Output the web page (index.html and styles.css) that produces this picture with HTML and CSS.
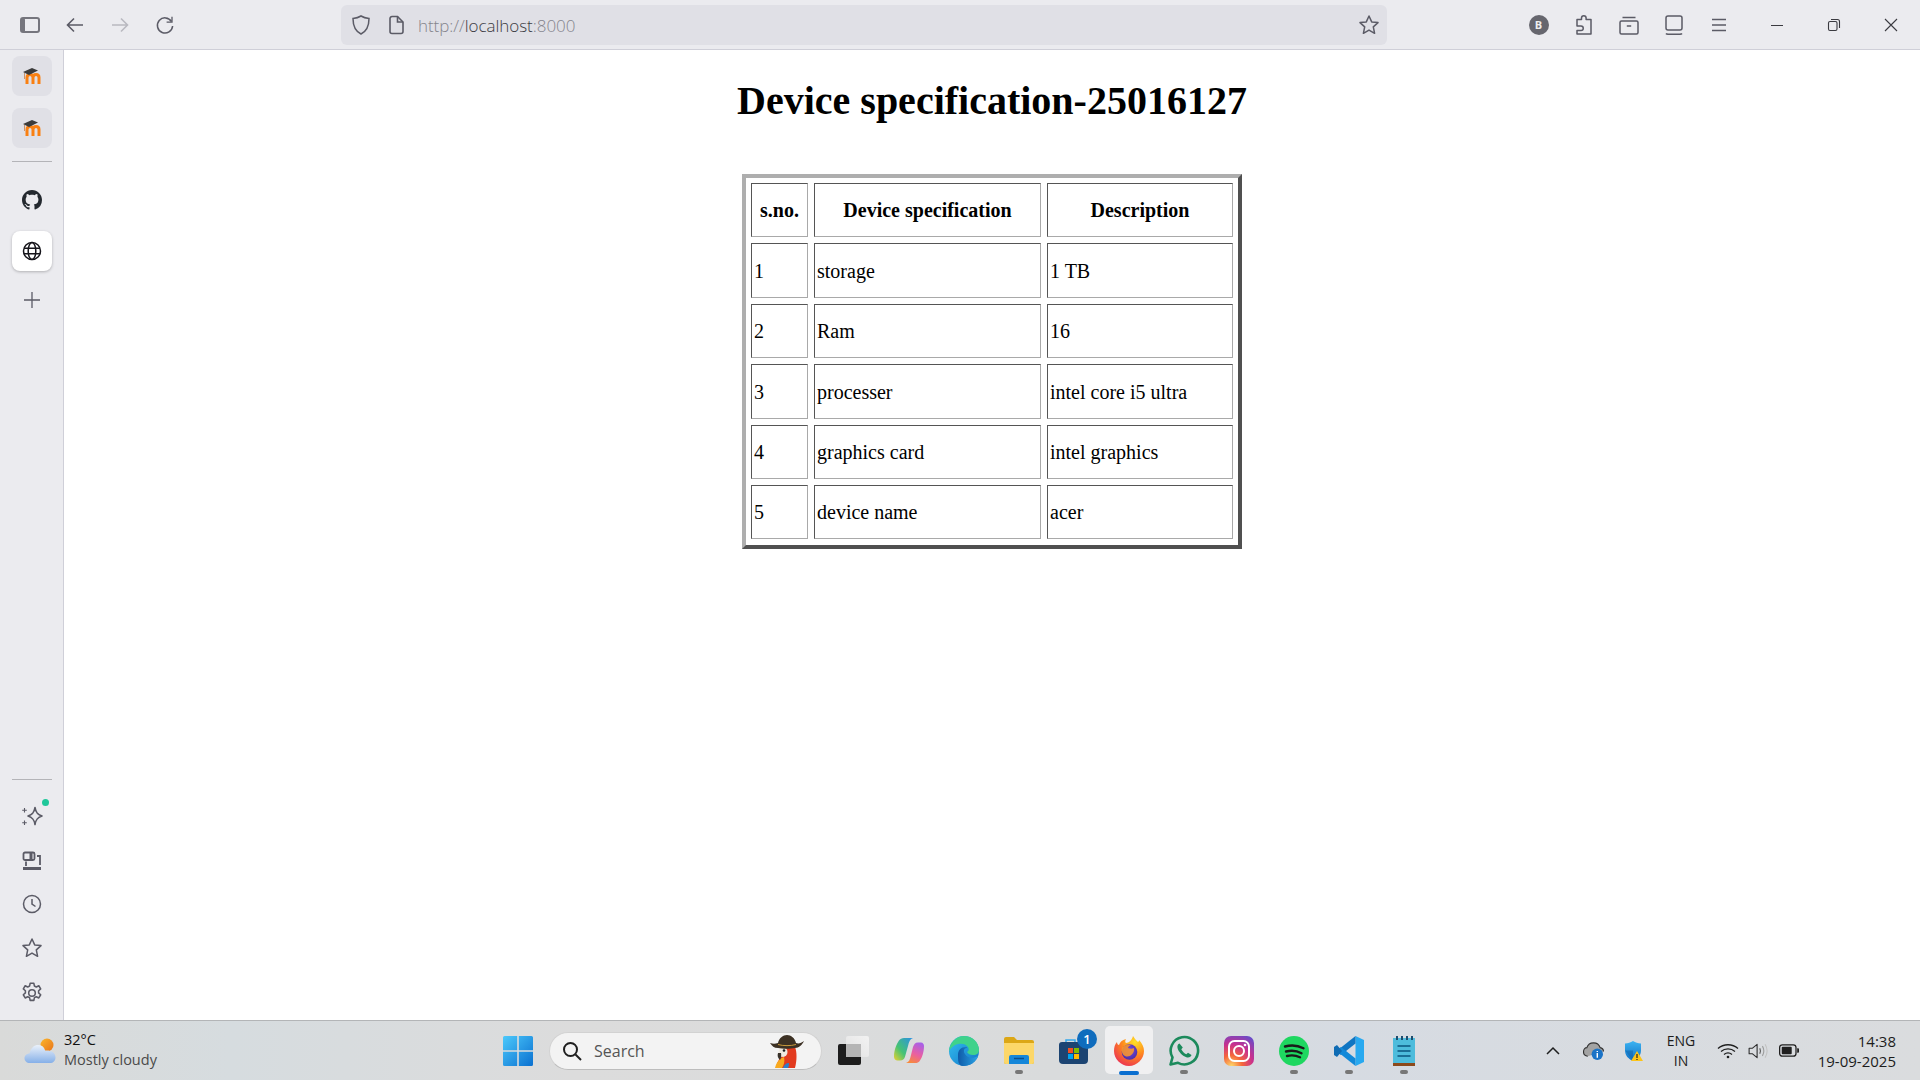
FILE: index.html

```html
<!DOCTYPE html>
<html lang="en">
<head>
  <meta charset="UTF-8" />
  <title>Device specification</title>
  <link rel="stylesheet" href="styles.css">
</head>
<body>
  <!-- browser toolbar -->
  <header class="toolbar">
    <div class="tool-group nav-group">
      <span class="tool"><svg width="22" height="18" viewBox="0 0 22 18"><rect x="2" y="2" width="18" height="14" rx="2" fill="none" stroke="#75757d" stroke-width="2"/><rect x="2" y="2" width="4" height="14" rx="1.500" fill="#75757d"/></svg></span>
      <span class="tool"><svg width="20" height="18" viewBox="0 0 20 18" fill="none" stroke="#5b5b66" stroke-width="1.600"><path d="M18 9H2.500M9 2.500 2.500 9 9 15.500"/></svg></span>
      <span class="tool"><svg width="20" height="18" viewBox="0 0 20 18" fill="none" stroke="#b9b9c0" stroke-width="1.600"><path d="M2 9h15.500M11 2.500 17.500 9 11 15.500"/></svg></span>
      <span class="tool"><svg width="20" height="20" viewBox="0 0 20 20" fill="none" stroke="#5b5b66" stroke-width="1.500"><path d="M16.500 6.500A7.600 7.600 0 1 0 17.600 11"/><path d="M17 1.800v5.400h-5.400" stroke-width="1.300"/></svg></span>
    </div>
    <div class="urlbar">
      <svg class="url-shield" width="20" height="22" viewBox="0 0 20 22" fill="none" stroke="#5b5b66" stroke-width="1.500"><path d="M10 2c2.500 1.600 5 2.200 8 2.400 0 7.400-1.800 12.400-8 15.600C3.800 16.800 2 11.800 2 4.400 5 4.200 7.500 3.600 10 2z"/></svg>
      <svg class="url-doc" width="18" height="20" viewBox="0 0 18 20" fill="none" stroke="#5b5b66" stroke-width="1.600"><path d="M3 3.500A2 2 0 0 1 5 1.500h5.500L16 7v9.500a2 2 0 0 1-2 2H5a2 2 0 0 1-2-2z"/><path d="M10.500 1.500V7H16"/></svg>
      <span class="url-text"><span class="dim">http://</span>localhost<span class="dim">:8000</span></span>
      <svg class="url-star" width="22" height="22" viewBox="0 0 22 22" fill="none" stroke="#5b5b66" stroke-width="1.500" stroke-linejoin="round"><path d="m11 2 2.700 5.900 6.300.7-4.700 4.300 1.300 6.400L11 16.100l-5.600 3.200 1.300-6.400L2 8.600l6.300-.7z"/></svg>
    </div>
    <div class="tool-group ext-group">
      <span class="tool"><span class="badge-b">B</span></span>
      <span class="tool"><svg width="20" height="22" viewBox="0 0 20 22" fill="none" stroke="#5b5b66" stroke-width="1.500" stroke-linejoin="round"><path d="M3 5.500h4.500V4a2.300 2.300 0 0 1 4.600 0v1.500H17V20H3v-3.500h4a2.200 2.200 0 0 0 0-4.500H3z"/></svg></span>
      <span class="tool"><svg width="22" height="22" viewBox="0 0 22 22" fill="none" stroke="#5b5b66" stroke-width="1.500"><rect x="2" y="7" width="18" height="13" rx="1.500"/><path d="M4.500 3.500h13M8.800 12h4.400"/></svg></span>
      <span class="tool"><svg width="20" height="22" viewBox="0 0 20 22" fill="none" stroke="#5b5b66" stroke-width="1.500"><rect x="2" y="2" width="16" height="14" rx="2"/><path d="M2 19.500c.5.700 1 .8 2 .8h12c1 0 1.500-.1 2-.8"/></svg></span>
      <span class="tool"><svg width="18" height="16" viewBox="0 0 18 16" stroke="#5b5b66" stroke-width="1.300"><path d="M2 2.500h14M2 8h14M2 13.500h14"/></svg></span>
    </div>
    <div class="win-controls">
      <span class="win-btn"><svg width="14" height="14" viewBox="0 0 14 14" stroke="#3a3a40"><path d="M1 7.500h12"/></svg></span>
      <span class="win-btn"><svg width="14" height="14" viewBox="0 0 14 14" fill="none" stroke="#3a3a40" stroke-width="1.100"><rect x="1.500" y="3.500" width="8.500" height="9" rx="1.500"/><path d="M4 1.500h6.500a2 2 0 0 1 2 2V10"/></svg></span>
      <span class="win-btn"><svg width="14" height="14" viewBox="0 0 14 14" stroke="#3a3a40" stroke-width="1.100"><path d="m1 1 12 12M13 1 1 13"/></svg></span>
    </div>
  </header>

  <div class="middle">
    <aside class="sidebar">
      <span class="side-tile">
        <svg width="24" height="18" viewBox="0 0 24 18"><path d="M7 17V10.500Q7 7.500 10 7.500t3 3V17M13 10.500Q13 7.500 16 7.500t3 3V17" fill="none" stroke="#f98012" stroke-width="3"/><path d="M3 5 12 1l6 2.500L9 8z" fill="#3b3b3b"/><path d="M4.500 6v6" stroke="#c9936a"/></svg>
      </span>
      <span class="side-tile">
        <svg width="24" height="18" viewBox="0 0 24 18"><path d="M7 17V10.500Q7 7.500 10 7.500t3 3V17M13 10.500Q13 7.500 16 7.500t3 3V17" fill="none" stroke="#f98012" stroke-width="3"/><path d="M3 5 12 1l6 2.500L9 8z" fill="#3b3b3b"/><path d="M4.500 6v6" stroke="#c9936a"/></svg>
      </span>
      <div class="side-sep first-sep"></div>
      <span class="side-item github"><svg width="20" height="20" viewBox="0 0 16 16" fill="#24292f"><path d="M8 0C3.580 0 0 3.580 0 8c0 3.540 2.290 6.530 5.470 7.590.4.070.55-.17.55-.38 0-.19-.01-.82-.01-1.490-2.010.37-2.530-.49-2.690-.94-.09-.23-.48-.94-.82-1.130-.28-.15-.68-.52-.01-.53.63-.01 1.080.58 1.230.82.72 1.210 1.870.87 2.330.66.07-.52.28-.87.51-1.070-1.780-.2-3.640-.89-3.640-3.950 0-.87.31-1.590.82-2.150-.08-.2-.36-1.020.08-2.120 0 0 .67-.21 2.200.82.64-.18 1.320-.27 2-.27.68 0 1.360.09 2 .27 1.530-1.040 2.200-.82 2.200-.82.44 1.100.16 1.920.08 2.120.51.56.82 1.270.82 2.150 0 3.070-1.870 3.750-3.650 3.950.29.25.54.73.54 1.480 0 1.070-.01 1.930-.01 2.200 0 .21.15.46.55.38A8.013 8.013 0 0 0 16 8c0-4.420-3.580-8-8-8z"/></svg></span>
      <span class="side-tile current"><svg width="20" height="20" viewBox="0 0 20 20" fill="none" stroke="#15141a" stroke-width="1.500"><circle cx="10" cy="10" r="8.500"/><ellipse cx="10" cy="10" rx="3.800" ry="8.500"/><path d="M2 7.200h16M2 12.800h16"/></svg></span>
      <span class="side-item"><svg width="16" height="16" viewBox="0 0 16 16" stroke="#5b5b66" stroke-width="1.300"><path d="M8 0v16M0 8h16"/></svg></span>

      <div class="side-bottom">
        <div class="side-sep"></div>
        <span class="side-row sparkle">
          <svg width="22" height="22" viewBox="0 0 22 22" fill="none" stroke="#5b5b66" stroke-width="1.600" stroke-linejoin="round"><path d="M14 2.500c.8 4.800 2.300 7 7 8.500-4.700 1.500-6.200 3.700-7 8.500-.8-4.800-2.300-7-7-8.500 4.700-1.500 6.200-3.700 7-8.500z"/><path d="M3.500 3v4.500M1.200 5.200h4.600M3.500 15.500V20M1.200 17.700h4.600" stroke-width="1.100"/></svg>
          <span class="green-dot"></span>
        </span>
        <span class="side-row drive"><svg width="20" height="20" viewBox="0 0 20 20" fill="none" stroke="#5b5b66" stroke-width="1.800"><rect x="1.500" y="1.500" width="11" height="7.500" rx="1.500"/><path d="M9 1.500v7.500" stroke-width="3"/><path d="M15 5h3v9M4 10.500V15"/><path d="M1 17.500h18" stroke-width="3"/></svg></span>
        <span class="side-row"><svg width="20" height="20" viewBox="0 0 20 20" fill="none" stroke="#5b5b66" stroke-width="1.500"><circle cx="10" cy="10" r="8.500"/><path d="M10 5v5l3.500 2.500"/></svg></span>
        <span class="side-row"><svg width="22" height="22" viewBox="0 0 22 22" fill="none" stroke="#5b5b66" stroke-width="1.500" stroke-linejoin="round"><path d="m11 2 2.700 5.900 6.300.7-4.700 4.300 1.300 6.400L11 16.100l-5.600 3.200 1.300-6.400L2 8.600l6.300-.7z"/></svg></span>
        <span class="side-row gear"><svg width="22" height="22" viewBox="0 0 20 20" fill="none" stroke="#5b5b66" stroke-width="1.400" stroke-linejoin="round"><circle cx="10" cy="10" r="3"/><path d="m8.300 1.200h3.400l.5 2.500 1.700.8 2.300-1.100 1.700 2.900-1.900 1.700v1.900l1.900 1.700-1.700 2.900-2.300-1.100-1.700.8-.5 2.500H8.300l-.5-2.500-1.700-.8-2.300 1.100-1.700-2.900 1.900-1.700V8l-1.900-1.700 1.700-2.900 2.300 1.100 1.700-.8z"/></svg></span>
      </div>
    </aside>

    <main class="page">
      <h1>Device specification-25016127</h1>
      <div class="spec-frame">
        <table class="spec-table">
          <thead>
            <tr><th class="col-no">s.no.</th><th class="col-spec">Device specification</th><th class="col-desc">Description</th></tr>
          </thead>
          <tbody>
            <tr class="tall"><td>1</td><td>storage</td><td>1 TB</td></tr>
            <tr><td>2</td><td>Ram</td><td>16</td></tr>
            <tr class="tall"><td>3</td><td>processer</td><td>intel core i5 ultra</td></tr>
            <tr><td>4</td><td>graphics card</td><td>intel graphics</td></tr>
            <tr><td>5</td><td>device name</td><td>acer</td></tr>
          </tbody>
        </table>
      </div>
    </main>
  </div>

  <!-- windows taskbar -->
  <footer class="taskbar">
    <div class="weather">
      <svg width="32" height="28" viewBox="0 0 32 28"><defs><linearGradient id="sun" x1="0" y1="0" x2="1" y2="1"><stop offset="0" stop-color="#fbb62c"/><stop offset="1" stop-color="#e8741a"/></linearGradient><linearGradient id="cloud" x1="0" y1="0" x2="0" y2="1"><stop offset="0" stop-color="#eaf1fa"/><stop offset="1" stop-color="#86b0e8"/></linearGradient></defs><circle cx="23" cy="8" r="6.500" fill="url(#sun)"/><path d="M6 26c-3.500 0-5.500-2.300-5.500-4.800 0-2.800 2.200-4.700 5-4.800C7 10.500 10.500 8 14 8c3.600 0 6 1.800 7.200 5.500 5.500-.7 10.300 1.900 10.300 7 0 3.500-2.400 5.500-5.500 5.500z" fill="url(#cloud)"/></svg>
      <div class="weather-text"><span class="temp">32°C</span><span class="sky">Mostly cloudy</span></div>
    </div>

    <div class="task-row">
      <span class="task-item"><svg width="30" height="30" viewBox="0 0 30 30"><defs><linearGradient id="win" x1="0" y1="0" x2="1" y2="1"><stop offset="0" stop-color="#4cc9fb"/><stop offset="1" stop-color="#0a70d0"/></linearGradient></defs><path fill="url(#win)" d="M0 1.500A1.500 1.500 0 0 1 1.500 0h12.700v14.200H0zM15.800 0h12.700A1.500 1.500 0 0 1 30 1.500v12.700H15.800zM0 15.800h14.200V30H1.500A1.500 1.500 0 0 1 0 28.500zM15.800 15.800H30v12.700a1.500 1.500 0 0 1-1.500 1.500H15.800z"/></svg></span>

      <div class="search">
        <svg width="20" height="20" viewBox="0 0 20 20" fill="none" stroke="#1f1f1f" stroke-width="2"><circle cx="8.500" cy="8.500" r="6.500"/><path d="m13.500 13.500 5.500 5.500"/></svg>
        <span class="search-label">Search</span>
        <svg class="parrot" width="34" height="34" viewBox="0 0 34 34"><path d="M11 13h14c2 5 2 13 0 21H6c1-6 3-9 6-12z" fill="#e23a1e"/><path d="M5 34c1-5 4-9 9-11 1 4 0 8-2 11z" fill="#f8a91f"/><path d="M13 34c1-3 3-5 6-5 0 2 0 3-1 5z" fill="#2e7fc9"/><ellipse cx="13" cy="18" rx="4.500" ry="5" fill="#efe9df"/><circle cx="14" cy="16.500" r="1.300" fill="#1c1c1c"/><path d="M8 19c-1 3 0 5 2 7 1-2 1.500-4 1-7z" fill="#39322a"/><path d="M0 9c3 1 5 1 8 0 1-5 5-8 9-8s8 3 9 8c3 1 5 0 8-2-2 4-5 7-9 7-5 1-12 1-17 0-4 0-6-2-8-5z" fill="#3d3124"/><path d="M8 10.500c5 1.500 13 1.500 18 0" stroke="#c99a3d" fill="none"/></svg>
      </div>

      <span class="task-item"><svg width="32" height="30" viewBox="0 0 32 30"><defs><linearGradient id="tv" x1="1" y1="0" x2="0" y2="1"><stop offset="0" stop-color="#f2f2f2"/><stop offset="1" stop-color="#e2e2e2"/></linearGradient></defs><rect x="8" y="0" width="23" height="21" rx="2" fill="url(#tv)"/><rect x="0" y="8" width="23" height="21" rx="2" fill="#1d1d1d"/><rect x="8" y="8" width="15" height="13" fill="#b5b5b5"/></svg></span>

      <span class="task-item"><svg width="30" height="27" viewBox="0 0 30 30" preserveAspectRatio="none"><defs><linearGradient id="co1" x1="0" y1="1" x2="1" y2="0"><stop offset="0" stop-color="#ead02f"/><stop offset=".4" stop-color="#45c373"/><stop offset="1" stop-color="#2c8fe8"/></linearGradient><linearGradient id="co2" x1=".7" y1="0" x2=".3" y2="1"><stop offset="0" stop-color="#a860e8"/><stop offset=".55" stop-color="#ea5fa0"/><stop offset="1" stop-color="#f78a3c"/></linearGradient></defs><path d="M10 1h9c-3 1-4 4-5 9l-3 12c-1 3-2 4-5 4H3c-2 0-3-2-3-4 0-8 3-15 5-18 1-2 3-3 5-3z" fill="url(#co1)"/><path d="M21 29h-9c3-1 4-4 5-9l2-9c1-3 2-5 5-5h3c2 0 3 2 3 4 0 7-2 13-4 16-1 2-3 3-5 3z" fill="url(#co2)"/></svg></span>

      <span class="task-item"><svg width="30" height="30" viewBox="0 0 30 30"><defs><linearGradient id="ed1" x1="0" y1="0" x2="1" y2="1"><stop offset="0" stop-color="#35c1f1"/><stop offset="1" stop-color="#1173c6"/></linearGradient><linearGradient id="ed2" x1="0" y1="0" x2="1" y2="0"><stop offset="0" stop-color="#0f5aa8"/><stop offset="1" stop-color="#2aa4e6"/></linearGradient></defs><circle cx="15" cy="15" r="15" fill="url(#ed1)"/><path d="M15 0c8 0 15 6 15 14 0 3-2 5-6 5-3 0-5-1-6-3 2-1 2-3 1-5-2-3-6-4-10-3C5 9 1 12 0 16 0 7 7 0 15 0z" fill="#3fd28b"/><path d="M9 19c0-5 3-8 8-8 1 0 1 0 1 1-3 0-4 3-2 6 2 4 8 5 13 2-2 6-8 10-15 10-5 0-5-6-5-11z" fill="url(#ed2)"/></svg></span>

      <span class="task-item has-dot"><svg width="30" height="27" viewBox="0 0 30 27"><path d="M0 2a2 2 0 0 1 2-2h8l3 3h15a2 2 0 0 1 2 2v20a2 2 0 0 1-2 2H2a2 2 0 0 1-2-2z" fill="#dca716"/><path d="M0 6h30v19a2 2 0 0 1-2 2H2a2 2 0 0 1-2-2z" fill="#fcd769"/><path d="M5 27v-7a2 2 0 0 1 2-2h16a2 2 0 0 1 2 2v7z" fill="#1687d9"/><path d="M10 21.500h10" stroke="#0b4f8d" stroke-width="1.500"/></svg></span>

      <span class="task-item"><svg width="30" height="28" viewBox="0 0 30 28"><path d="M7 6V3h9v3" fill="none" stroke="#35a8ea" stroke-width="1.500"/><path d="M0 8a3 3 0 0 1 3-3h23a3 3 0 0 1 3 3v15a4 4 0 0 1-4 4H4a4 4 0 0 1-4-4z" fill="#1c4472"/><path d="M9 11h5v5H9z" fill="#f25022"/><path d="M15 11h5v5h-5z" fill="#7fba00"/><path d="M9 17h5v5H9z" fill="#00a4ef"/><path d="M15 17h5v5h-5z" fill="#ffb900"/></svg><span class="store-badge">1</span></span>

      <span class="task-item active"><svg width="30" height="30" viewBox="0 0 30 30"><defs><radialGradient id="ff1" cx=".7" cy=".2" r=".95"><stop offset="0" stop-color="#ffe226"/><stop offset=".45" stop-color="#ff8a1e"/><stop offset="1" stop-color="#e9255a"/></radialGradient><radialGradient id="ff2" cx=".5" cy=".4" r=".6"><stop offset="0" stop-color="#7b4de0"/><stop offset="1" stop-color="#4a2ea8"/></radialGradient></defs><path d="M19 0c2 3 3 4 5 6 1-1 1-1 1-2 3 3 5 7 5 11 0 8-7 15-15 15S0 23 0 15c0-4 1-7 3-9 0 2 1 3 2 3 1-3 3-5 7-6-1 2-1 3 0 4 3 0 6-3 7-7z" fill="url(#ff1)"/><circle cx="15.500" cy="16" r="7.800" fill="url(#ff2)"/><path d="M8 12c2-3 6-4 9-3-2 1-3 2-3 3 2 1 4 1 6 0 1 6-5 10-9 8-2-1-4-4-3-8z" fill="#ff9a25" opacity=".85"/></svg></span>

      <span class="task-item has-dot"><svg width="32" height="32" viewBox="0 0 32 32"><path d="M2.500 29.500l2-7A13.700 13.700 0 1 1 10 27.800z" fill="none" stroke="#1c8a5c" stroke-width="2.600" stroke-linejoin="round"/><path d="M11.500 8.500c-1.500.5-2.500 2-2 4.500 1 4 5 8 9.500 9.500 2.500.5 4-1 4.500-2.500l-3.500-2.200-1.700 1.500c-2-.8-4-2.800-5-5l1.500-1.700z" fill="#1c8a5c"/></svg></span>

      <span class="task-item"><svg width="30" height="30" viewBox="0 0 30 30"><defs><radialGradient id="ig" cx=".25" cy="1" r="1.200"><stop offset="0" stop-color="#fdd86a"/><stop offset=".3" stop-color="#f5663a"/><stop offset=".6" stop-color="#c9308e"/><stop offset="1" stop-color="#5b4fd1"/></radialGradient></defs><rect width="30" height="30" rx="7" fill="url(#ig)"/><rect x="5" y="5" width="20" height="20" rx="5.500" fill="none" stroke="#fff" stroke-width="2"/><circle cx="15" cy="15" r="5" fill="none" stroke="#fff" stroke-width="2"/><circle cx="21" cy="9" r="1.300" fill="#fff"/></svg></span>

      <span class="task-item has-dot"><svg width="30" height="30" viewBox="0 0 30 30"><circle cx="15" cy="15" r="15" fill="#1ed760"/><path d="M6 10.500c6-1.600 13-1.100 18.500 1.800M7 15.500c5-1.300 11-.8 15.500 1.700M8 20c4-1 9-.7 13 1.300" fill="none" stroke="#1a1a1a" stroke-width="2.400" stroke-linecap="round"/></svg></span>

      <span class="task-item has-dot"><svg width="30" height="30" viewBox="0 0 30 30"><path d="M21.500 0 30 4v22l-8.500 4z" fill="#28a9f0"/><path d="M21.500 0v7.500L7 19 2 15.500z" fill="#0f75c2"/><path d="M21.500 30v-7.500L7 11l-5 3.500z" fill="#1289d9"/><path d="M0 11l3-2 5 6-5 6-3-2z" fill="#0f6cb4"/></svg></span>

      <span class="task-item has-dot"><svg width="24" height="30" viewBox="0 0 24 30"><rect x="1" y="2" width="22" height="25" fill="#4dbcdc"/><rect x="1" y="27" width="22" height="3" fill="#8c4a1c"/><path d="M5 0v4M10 0v4M15 0v4M20 0v4" stroke="#1c4d6e" stroke-width="2"/><path d="M5.500 10h13M5.500 15h13M5.500 20h13" stroke="#1a6f96" stroke-width="1.800"/></svg></span>
    </div>

    <div class="tray">
      <span class="tray-icon chevron"><svg width="16" height="10" viewBox="0 0 16 10" fill="none" stroke="#1f1f1f" stroke-width="1.500"><path d="m2 8 6-6 6 6"/></svg></span>
      <span class="tray-icon cloud"><svg width="21" height="19" viewBox="0 0 22 20"><path d="M5 16c-3 0-4.500-2-4.500-4.500S2 7 4 7c1-3 4-5 7-5s6 2 7 5c2 .5 3.500 2 3.500 4" fill="#a3a3a3" stroke="#333" stroke-width="1.200"/><circle cx="15" cy="14" r="6" fill="#1a73c7"/><path d="M15 12.500V17.500M15 10.500v1" stroke="#fff" stroke-width="1.500"/></svg></span>
      <span class="tray-icon shield"><svg width="20" height="20" viewBox="0 0 20 20"><defs><linearGradient id="sh" x1="0" y1="0" x2="0" y2="1"><stop offset="0" stop-color="#3cb4f2"/><stop offset="1" stop-color="#0f6fc4"/></linearGradient></defs><path d="M9 0c2.500 1.500 5 2.300 8 2.500v7c0 5-3.500 8.500-8 10.500C4.500 18 1 14.500 1 9.500v-7C4 2.300 6.500 1.500 9 0z" fill="url(#sh)"/><path d="M9 0v19.500L1 9.500h8z" fill="#0e5fa8" opacity=".5"/><path d="M13 10l6 10H7z" fill="#fcc419"/><path d="M13 13v4M13 18v1" stroke="#222" stroke-width="1.200"/></svg></span>
      <div class="lang"><span>ENG</span><span>IN</span></div>
      <span class="tray-icon wifi"><svg width="22" height="16" viewBox="0 0 22 16" fill="none" stroke="#1f1f1f" stroke-width="1.300"><path d="M1 5.500c5.500-5 14.500-5 20 0M4 8.500c4-3.400 10-3.400 14 0M7 11.500c2.300-1.800 5.700-1.800 8 0"/><circle cx="11" cy="14" r="1.300" fill="#1f1f1f" stroke="none"/></svg></span>
      <span class="tray-icon speaker"><svg width="20" height="16" viewBox="0 0 22 18" fill="none" stroke-width="1.200"><path d="M1 6h3.500L10 1.500v15L4.500 12H1z" stroke="#2b2b2b" stroke-linejoin="round"/><path d="M13 6c1 2 1 4 0 6" stroke="#555"/><path d="M16 3.500c2 3.500 2 7.500 0 11" stroke="#9a9a9a"/><path d="M19 1.500c2.700 4.500 2.700 10.500 0 15" stroke="#c2c2c2"/></svg></span>
      <span class="tray-icon battery"><svg width="20" height="13" viewBox="0 0 22 14"><rect x=".7" y=".7" width="18" height="12.600" rx="3" fill="none" stroke="#1f1f1f" stroke-width="1.400"/><rect x="3" y="3" width="11" height="8" rx="1" fill="#1f1f1f"/><path d="M20 4.500h1a1 1 0 0 1 1 1v3a1 1 0 0 1-1 1h-1z" fill="#1f1f1f"/></svg></span>
      <div class="clock"><span>14:38</span><span>19-09-2025</span></div>
    </div>
  </footer>
</body>
</html>
```

FILE: styles.css

```css
html, body { margin: 0; height: 100%; }
body {
  width: 1920px; height: 1080px; overflow: hidden;
  display: flex; flex-direction: column;
  font-family: "Open Sans", "Noto Sans", sans-serif;
  background: #fff;
}
svg { display: block; flex: none; }

/* toolbar */
.toolbar {
  height: 50px; box-sizing: border-box; flex: none;
  display: flex; align-items: center;
  background: #ebebef; border-bottom: 1px solid #cfcfd8;
}
.tool-group { display: flex; }
.nav-group { margin-left: 7px; }
.ext-group { margin-left: 129px; }
.tool { width: 45px; height: 40px; display: flex; align-items: center; justify-content: center; }
.urlbar {
  margin-left: 154px; width: 1046px; height: 40px;
  display: flex; align-items: center;
  background: #e0e0e6; border-radius: 6px;
}
.url-shield { margin-left: 10px; }
.url-doc { margin-left: 16px; }
.url-text {
  margin-left: 13px; padding-top: 2px; font-size: 17px; color: #3b3b42;
  font-family: "Open Sans", sans-serif; font-weight: 300; letter-spacing: -0.05px;
}
.url-text .dim { color: #85858d; }
.url-star { margin-left: auto; margin-right: 7px; }
.badge-b {
  width: 20px; height: 20px; border-radius: 50%;
  background: #66666e; color: #eee; font: bold 11px "Open Sans", sans-serif;
  display: flex; align-items: center; justify-content: center;
}
.win-controls { margin-left: 7px; display: flex; }
.win-btn { width: 57.33px; height: 40px; display: flex; align-items: center; justify-content: center; }

/* sidebar + page */
.middle { flex: 1; display: flex; min-height: 0; }
.sidebar {
  width: 64px; box-sizing: border-box; flex: none;
  padding: 6px 11px 6px 12px;
  display: flex; flex-direction: column;
  background: #ebebef; border-right: 1px solid #cfcfd8;
}
.side-tile, .side-item {
  height: 40px; flex: none; border-radius: 8px;
  display: flex; align-items: center; justify-content: center;
}
.side-tile { background: #e0e0e6; margin-bottom: 12px; }
.side-sep { height: 1px; background: #b4b4b8; flex: none; }
.first-sep { margin: 1px 0 18px; }
.github { margin-bottom: 11px; }
.side-tile.current { background: #fff; box-shadow: 0 1px 3px rgba(0, 0, 0, 0.25); margin-bottom: 9px; }
.side-bottom { margin-top: auto; }
.side-bottom .side-sep { margin-bottom: 14px; }
.side-row { height: 44px; display: flex; align-items: center; justify-content: center; position: relative; }
.side-row.drive svg, .side-row.gear svg { transform: translateY(1px); }
.green-dot {
  position: absolute; top: 5px; right: 3px;
  width: 7px; height: 7px; border-radius: 50%; background: #1fc79a;
}

.page { flex: 1; min-width: 0; background: #fff; font-family: "Liberation Serif", serif; color: #000; }
.page h1 {
  margin: 28px 0 50px; text-align: center;
  font-size: 40px; line-height: 46px; font-weight: bold;
}
.spec-frame {
  width: 500px; height: 375px; box-sizing: border-box; margin: 0 auto;
  border: 4px solid; border-color: #aeaeae #505050 #505050 #aeaeae;
}
.spec-table {
  margin: -1px; table-layout: fixed; width: 494px;
  border-collapse: separate; border-spacing: 6px;
  font-size: 20px;
}
.spec-table th, .spec-table td {
  height: 54px; padding: 1px 2px 0; box-sizing: border-box;
  border: 1px solid; border-color: #555 #a9a9a9 #a9a9a9 #555;
}
.spec-table td { text-align: left; }
.spec-table tr.tall td { height: 55px; }
.col-no { width: 57px; }
.col-spec { width: 227px; }
.col-desc { width: 186px; }

/* taskbar */
.taskbar {
  height: 60px; box-sizing: border-box; flex: none;
  display: flex; align-items: center; position: relative;
  background: linear-gradient(90deg, #d9dad9 0%, #d6dcdf 12%, #dcdcdc 30%, #d9dbdc 55%, #d6dbe2 70%, #dadcde 100%);
  border-top: 1px solid #b3b5b7;
}
.weather { width: 490px; flex: none; display: flex; align-items: center; box-sizing: border-box; padding-left: 24px; }
.weather-text { margin: -2px 0 0 8px; display: flex; flex-direction: column; font-size: 14.5px; line-height: 20px; }
.temp { color: #111; }
.sky { color: #4a4a4a; }
.task-row { display: flex; align-items: center; }
.task-item {
  width: 55px; height: 59px; flex: none; position: relative;
  display: flex; align-items: center; justify-content: center;
}
.task-item.active::before {
  content: ""; position: absolute; left: 3.5px; top: 5px;
  width: 48px; height: 48px; border-radius: 5px; background: #f0f0f1;
}
.task-item.active svg { position: relative; }
.task-item.active::after {
  content: ""; position: absolute; left: 17.5px; bottom: 5px;
  width: 20px; height: 4px; border-radius: 2px; background: #0a6fd0;
}
.task-item.has-dot::after {
  content: ""; position: absolute; left: 23.5px; bottom: 6px;
  width: 8px; height: 4px; border-radius: 2px; background: #777;
}
.store-badge {
  position: absolute; top: 8px; left: 31px;
  width: 20px; height: 20px; border-radius: 50%;
  background: #0f6cbd; color: #fff; font-size: 13px; font-weight: 600;
  display: flex; align-items: center; justify-content: center;
}
.search {
  width: 273px; height: 38px; box-sizing: border-box; flex: none;
  margin: 0 4px; padding: 0 17px 0 12px;
  display: flex; align-items: center;
  background: #f3f3f3; border-radius: 19px; border: 1px solid #d2d2d2; border-bottom-color: #bdbdbd;
}
.search-label { margin-left: 12px; font-size: 16px; color: #555; }
.parrot { margin-left: auto; }
.tray { position: absolute; right: 0; top: 0; height: 59px; width: 400px; display: flex; align-items: center; }
.tray-icon { display: flex; justify-content: center; flex: none; width: 40px; }
.chevron { margin-left: 13px; }
.shield { margin-left: 1px; margin-right: -1px; }
.lang {
  width: 56px; flex: none; display: flex; flex-direction: column; align-items: center;
  font-size: 14px; line-height: 20px; color: #1c1c1c;
}
.wifi { width: 38px; }
.speaker { width: 30px; margin-left: -4px; }
.battery { width: 30px; margin-left: 1px; }
.clock {
  margin-left: auto; padding-right: 24px;
  display: flex; flex-direction: column; align-items: flex-end;
  font-size: 15px; line-height: 20px; color: #1c1c1c;
}
```
